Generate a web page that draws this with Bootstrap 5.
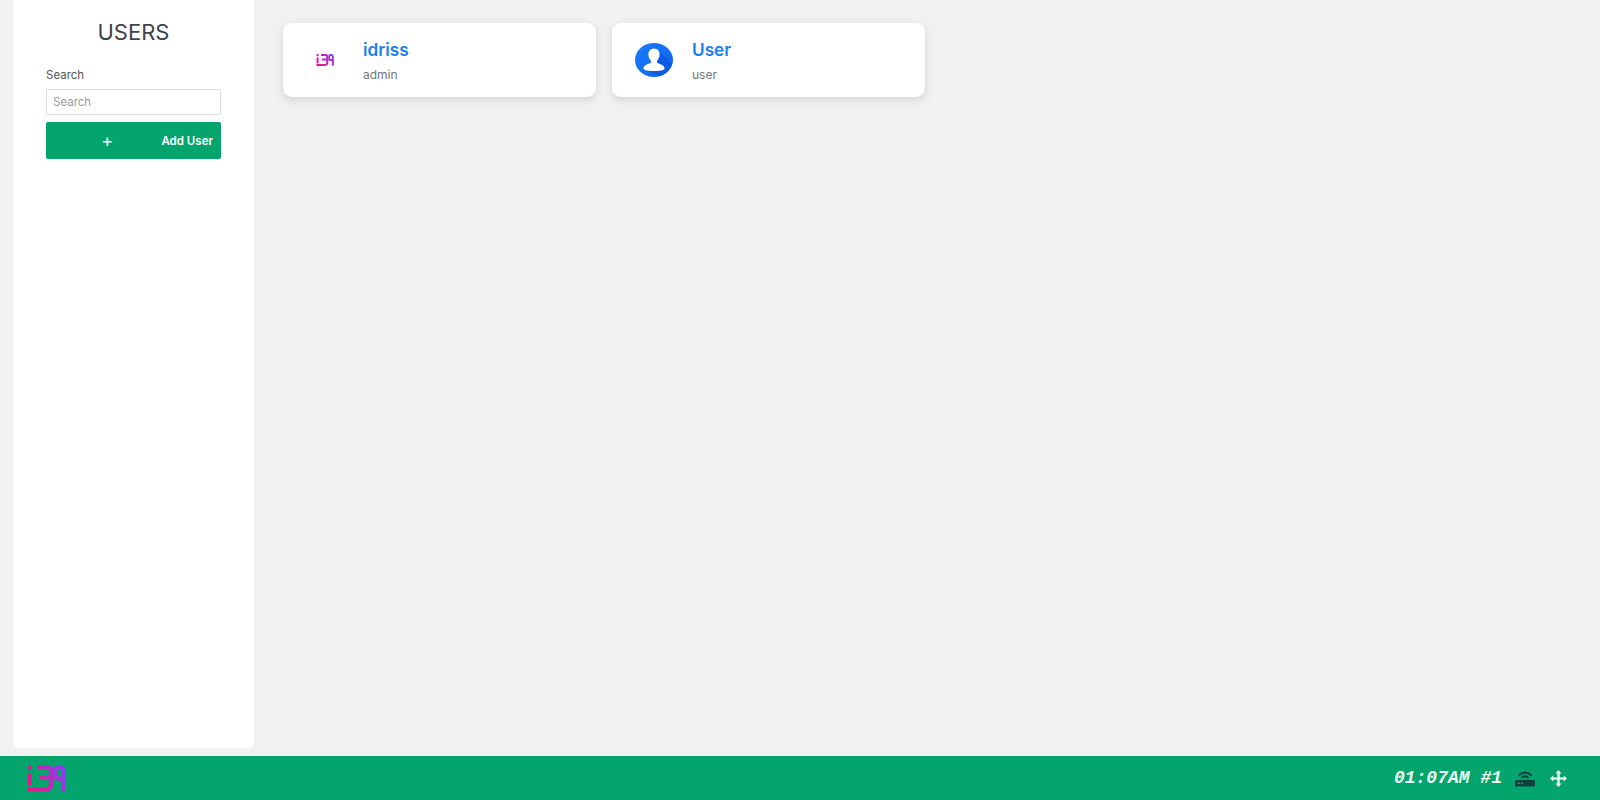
<!DOCTYPE html>
<html lang="en">
<head>
    <meta charset="UTF-8">
    <meta name="viewport" content="width=device-width, initial-scale=1.0">
    <title>Users</title>
    <link href="https://cdn.jsdelivr.net/npm/bootstrap@5.3.3/dist/css/bootstrap.min.css" rel="stylesheet">
    <style>
        body { background: #f1f1f1; font-family: Inter, "Liberation Sans", sans-serif; height: 100vh; overflow: hidden; }
        .side-panel { width: 241px; margin-left: 13px; margin-bottom: 8px; background: #fff; border-radius: 0 0 6px 6px; padding: 0 33px; }
        .side-title { font-size: 22px; font-weight: 400; color: #3f4347; text-align: center; margin: 20px 0 0; line-height: 24px; }
        .search-label { font-size: 11.5px; color: #555; margin: 24px 0 6px; line-height: 15px; display: block; }
        .search-input { height: 26px; border-radius: 1px; border: 1px solid #dcdcdc; font-size: 11.5px; padding: 0 6px; }
        .search-input::placeholder { color: #9a9a9a; }
        .add-btn { height: 37px; margin-top: 7px; background: #04a56d; color: #fff; border: 0; border-radius: 2px; font-size: 11.5px; font-weight: 600; padding: 2px 8px 0 0; }
        .add-btn:hover { background: #04a56d; color: #fff; }
        .add-plus { font-size: 18px; font-weight: 400; line-height: 14px; padding: 0 0 2px 7px; }
        .user-list { padding: 23px 0 0 29px; gap: 16px; }
        .user-box { width: 313px; height: 74px; background: #fff; border: 0; border-radius: 9px; box-shadow: 0 3px 8px rgba(0,0,0,.12); }
        .user-pic { width: 80px; padding-left: 4px; }
        .user-name { font-size: 17.2px; font-weight: 600; color: #1a7ff0; line-height: 20px; margin-top: 17px; }
        .user-role { font-size: 12px; color: #757575; line-height: 14px; margin-top: 8px; }
        .bottom-bar { height: 44px; background: #04a56d; padding: 0 33px 0 26px; }
        .clock-text { font-family: "Liberation Mono", monospace; font-size: 18px; font-weight: 700; font-style: italic; color: #eafff6; margin-right: 13px; white-space: pre; }
        .router-ico { margin-right: 15px; }
    </style>
</head>
<body class="d-flex flex-column">
    <!-- logo usado no card e na barra -->
    <svg width="0" height="0" class="position-absolute">
        <defs>
            <linearGradient id="logoGrad" gradientUnits="userSpaceOnUse" x1="2" y1="24" x2="38" y2="6">
                <stop offset="0" stop-color="#f0148c"/>
                <stop offset=".5" stop-color="#c726b0"/>
                <stop offset="1" stop-color="#8a3cf5"/>
            </linearGradient>
            <symbol id="logoIba" viewBox="0 0 40 27">
                <g fill="none" stroke="url(#logoGrad)" stroke-width="4.4">
                    <path d="M3.500 0v5M3.500 8v13"/>
                    <path d="M1 24.500h18q6 0 6-5v-4q0-3-3-3H13M11 2.500h11q3 0 3 3v5q0 2-3 2"/>
                    <path d="M29.500 15V5q0-2.500 2.500-2.500h2.500Q37.500 2.500 37.500 6v20M29.500 13.500h8"/>
                </g>
            </symbol>
            <linearGradient id="avatarGrad" x1="0" y1="0" x2="1" y2="1">
                <stop offset="0" stop-color="#1b7cff"/>
                <stop offset="1" stop-color="#0c63ea"/>
            </linearGradient>
        </defs>
    </svg>

    <div class="d-flex flex-grow-1">
        <aside class="side-panel flex-shrink-0">
            <h1 class="side-title">USERS</h1>
            <label class="search-label" for="busca">Search</label>
            <input id="busca" type="text" class="form-control search-input" placeholder="Search">
            <button type="button" class="btn add-btn w-100 d-flex align-items-center">
                <span class="flex-grow-1 text-center add-plus">+</span>
                <span>Add User</span>
            </button>
        </aside>

        <main class="user-list d-flex align-items-start flex-grow-1">
            <div class="card user-box d-flex flex-row">
                <div class="user-pic d-flex align-items-center justify-content-center">
                    <svg width="18" height="14"><use href="#logoIba"/></svg>
                </div>
                <div>
                    <div class="user-name">idriss</div>
                    <div class="user-role">admin</div>
                </div>
            </div>
            <div class="card user-box d-flex flex-row">
                <div class="user-pic d-flex align-items-center justify-content-center">
                    <svg width="40" height="36" viewBox="0 0 40 36">
                        <ellipse cx="20" cy="18" rx="19" ry="17" fill="url(#avatarGrad)"/>
                        <path d="M24 8 L38 22 A19 17 0 0 1 26 34 L12 28 Z" fill="#0b4fd6" opacity=".55"/>
                        <path d="M20 6.500c-3.600 0-5.600 2.800-5.600 6 0 2.600 1 4.800 2.600 6.200v1.600c0 1-3.400 1.600-5.600 2.900-1.300.8-1.900 2-1.900 3.300 0 1.300 2 2.500 10.500 2.500s10.500-1.200 10.500-2.500c0-1.300-.6-2.500-1.900-3.300-2.200-1.300-5.600-1.900-5.600-2.900v-1.600c1.600-1.400 2.600-3.600 2.600-6.200 0-3.200-2-6-5.600-6z" fill="#fff"/>
                    </svg>
                </div>
                <div>
                    <div class="user-name">User</div>
                    <div class="user-role">user</div>
                </div>
            </div>
        </main>
    </div>

    <footer class="bottom-bar d-flex align-items-center justify-content-between flex-shrink-0">
        <svg width="40" height="27"><use href="#logoIba"/></svg>
        <div class="d-flex align-items-center">
            <span class="clock-text">01:07AM #1</span>
            <svg class="router-ico" width="20" height="17" viewBox="0 0 20 17" fill="none" stroke="#0f3f3e">
                <path d="M3.500 5.500Q10-.5 16.500 5.500M6.500 8Q10 4.500 13.500 8" stroke-width="1.800"/>
                <rect x="0" y="10" width="20" height="6.500" rx="1" fill="#0f3f3e" stroke="none"/>
                <path d="M3 13.200h1.500M6 13.200h1.500" stroke="#7fd0b0"/>
            </svg>
            <svg width="17" height="17" viewBox="0 0 17 17" fill="#eafff6">
                <path d="M8.500 0l3 3.400H9.700v4h4V5.500l3.300 3-3.300 3V9.500h-4v4h1.800l-3 3.500-3-3.500h1.800v-4h-4v2L0 8.500l3.300-3v2h4v-4H5.500z"/>
            </svg>
        </div>
    </footer>
</body>
</html>
